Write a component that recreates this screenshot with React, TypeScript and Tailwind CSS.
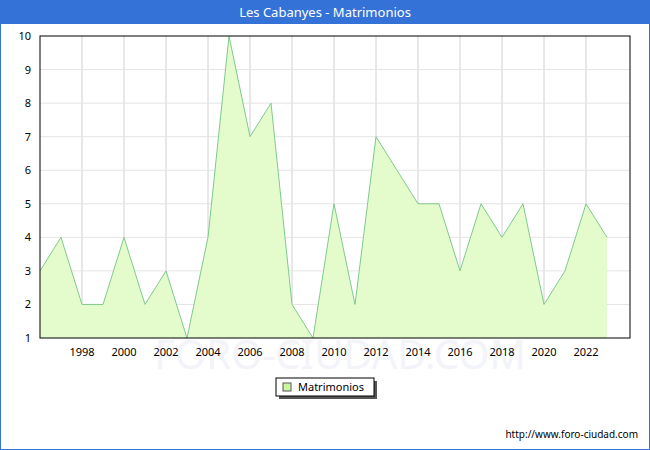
const data = [3,4,2,2,4,2,3,1,4,10,7,8,2,1,5,2,7,6,5,5,3,5,4,5,2,3,5,4];
const X = (i: number) => 40 + i * 21;
const Y = (v: number) => 337 - (v - 1) * (302 / 9);

export default function App() {
  const pts = data.map((v, i) => `${X(i)},${Y(v)}`).join(" ");
  const area = `${X(0)},337 ${pts} ${X(data.length - 1)},337`;
  const years = [1998,2000,2002,2004,2006,2008,2010,2012,2014,2016,2018,2020,2022];
  return (
    <div className="w-[650px] h-[450px] border border-[#3572d8] bg-white flex flex-col font-['DejaVu_Sans',sans-serif]">
      <div className="h-[23px] bg-[#3572d8] text-white text-[13px] flex items-center justify-center shrink-0">Les Cabanyes - Matrimonios</div>
      <svg width="648" height="425" className="block" viewBox="1 23 648 425">
        <text x="340" y="368" fontSize="40" fill="#f3f3fa" textAnchor="middle">FORO-CIUDAD.COM</text>
        {years.map((y) => { const x = X(y - 1996); return <line key={y} x1={x} x2={x} y1={35} y2={337} stroke="#d0d0d0" />; })}
        {[2,3,4,5,6,7,8,9].map((v) => <line key={v} x1={40} x2={630} y1={Y(v)} y2={Y(v)} stroke="#e4e4e4" />)}
        <polygon points={area} fill="#e4fccc" />
        <polyline points={pts} fill="none" stroke="#80c890" strokeWidth="1" />
        <rect x="40" y="35" width="590" height="302" fill="none" stroke="#000" />
        {[1,2,3,4,5,6,7,8,9,10].map((v) => <text key={v} x="31" y={Y(v) + 4} fontSize="11" textAnchor="end" fill="#000">{v}</text>)}
        {years.map((y) => <text key={y} x={X(y - 1996)} y="355" fontSize="11" textAnchor="middle" fill="#000">{y}</text>)}
        <rect x="279" y="380" width="98" height="18" fill="#555" />
        <rect x="276" y="377" width="98" height="18" fill="#fff" stroke="#000" />
        <rect x="283" y="382" width="8" height="8" fill="#cdf5a0" stroke="#555" />
        <text x="298" y="390" fontSize="11" fill="#000">Matrimonios</text>
        <text x="638" y="437" fontSize="10" textAnchor="end" fill="#000">http://www.foro-ciudad.com</text>
      </svg>
    </div>
  );
}
